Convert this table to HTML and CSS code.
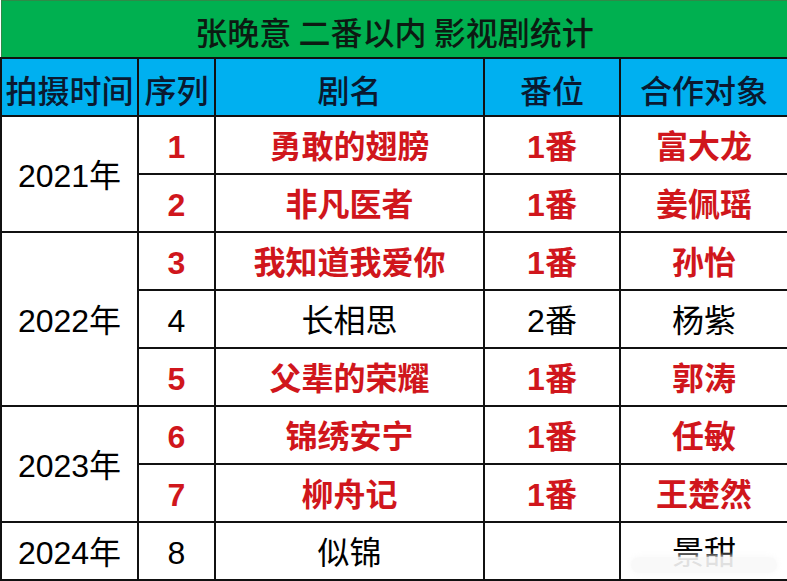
FILE: index.html
```html
<!DOCTYPE html>
<html lang="zh-CN">
<head>
<meta charset="utf-8">
<link rel="stylesheet" href="styles.css">
</head>
<body>
<table class="stats">
  <colgroup>
    <col class="c-year"><col class="c-no"><col class="c-name"><col class="c-rank"><col class="c-partner">
  </colgroup>
  <tr class="title-row"><td colspan="5" class="title">张晚意 二番以内 影视剧统计</td></tr>
  <tr class="head-row">
    <td class="head">拍摄时间</td><td class="head">序列</td><td class="head">剧名</td><td class="head">番位</td><td class="head">合作对象</td>
  </tr>
  <tr>
    <td rowspan="2" class="year">2021年</td>
    <td class="red num">1</td><td class="red">勇敢的翅膀</td><td class="red">1番</td><td class="red">富大龙</td>
  </tr>
  <tr>
    <td class="red num">2</td><td class="red">非凡医者</td><td class="red">1番</td><td class="red">姜佩瑶</td>
  </tr>
  <tr>
    <td rowspan="3" class="year">2022年</td>
    <td class="red num">3</td><td class="red">我知道我爱你</td><td class="red">1番</td><td class="red">孙怡</td>
  </tr>
  <tr>
    <td class="plain num">4</td><td class="plain">长相思</td><td class="plain">2番</td><td class="plain">杨紫</td>
  </tr>
  <tr>
    <td class="red num">5</td><td class="red">父辈的荣耀</td><td class="red">1番</td><td class="red">郭涛</td>
  </tr>
  <tr>
    <td rowspan="2" class="year">2023年</td>
    <td class="red num">6</td><td class="red">锦绣安宁</td><td class="red">1番</td><td class="red">任敏</td>
  </tr>
  <tr>
    <td class="red num">7</td><td class="red">柳舟记</td><td class="red">1番</td><td class="red">王楚然</td>
  </tr>
  <tr>
    <td class="year">2024年</td>
    <td class="plain num">8</td><td class="plain">似锦</td><td class="plain"></td><td class="plain last"><span class="partner">景甜</span><span class="watermark"></span></td>
  </tr>
</table>
</body>
</html>
```

FILE: styles.css
```css
html, body {
  margin: 0;
  padding: 0;
  background: #ffffff;
}

body {
  font-family: "Liberation Sans", "Noto Sans CJK SC", sans-serif;
  width: 787px;
  height: 581px;
  overflow: hidden;
}

.stats {
  border-collapse: collapse;
  table-layout: fixed;
  width: 787px;
}

.c-year { width: 137px; }
.c-no { width: 77px; }
.c-name { width: 269px; }
.c-rank { width: 136px; }
.c-partner { width: 168px; }

.stats td {
  border: 2px solid #111111;
  text-align: center;
  vertical-align: middle;
  padding: 4px 0 0 0;
  height: 52px;
  font-size: 32px;
  line-height: 1;
  white-space: nowrap;
}

.title-row td {
  border-top: 1px solid #2f8a48;
  border-left: 1px solid #2f8a48;
  border-right: 1px solid #2f8a48;
}

.title {
  background: #00b050;
  color: #0c1a12;
  font-size: 31px;
  font-weight: 500;
  font-family: "Noto Sans CJK SC", sans-serif;
}

.head {
  background: #00b0f0;
  color: #0a1930;
  font-family: "Noto Sans CJK SC", sans-serif;
  font-weight: 500;
  font-size: 31px;
}

.year {
  color: #000000;
  font-size: 32px;
}

.red {
  color: #d0161c;
  font-weight: bold;
}

.plain {
  color: #000000;
}

.last {
  position: relative;
  overflow: hidden;
}

.watermark {
  position: absolute;
  left: 10px;
  right: 10px;
  top: 34px;
  height: 16px;
  background: rgba(248, 248, 248, 0.9);
  border-radius: 8px;
  box-shadow: 0 0 4px 2px rgba(250, 250, 250, 0.8);
}
```
